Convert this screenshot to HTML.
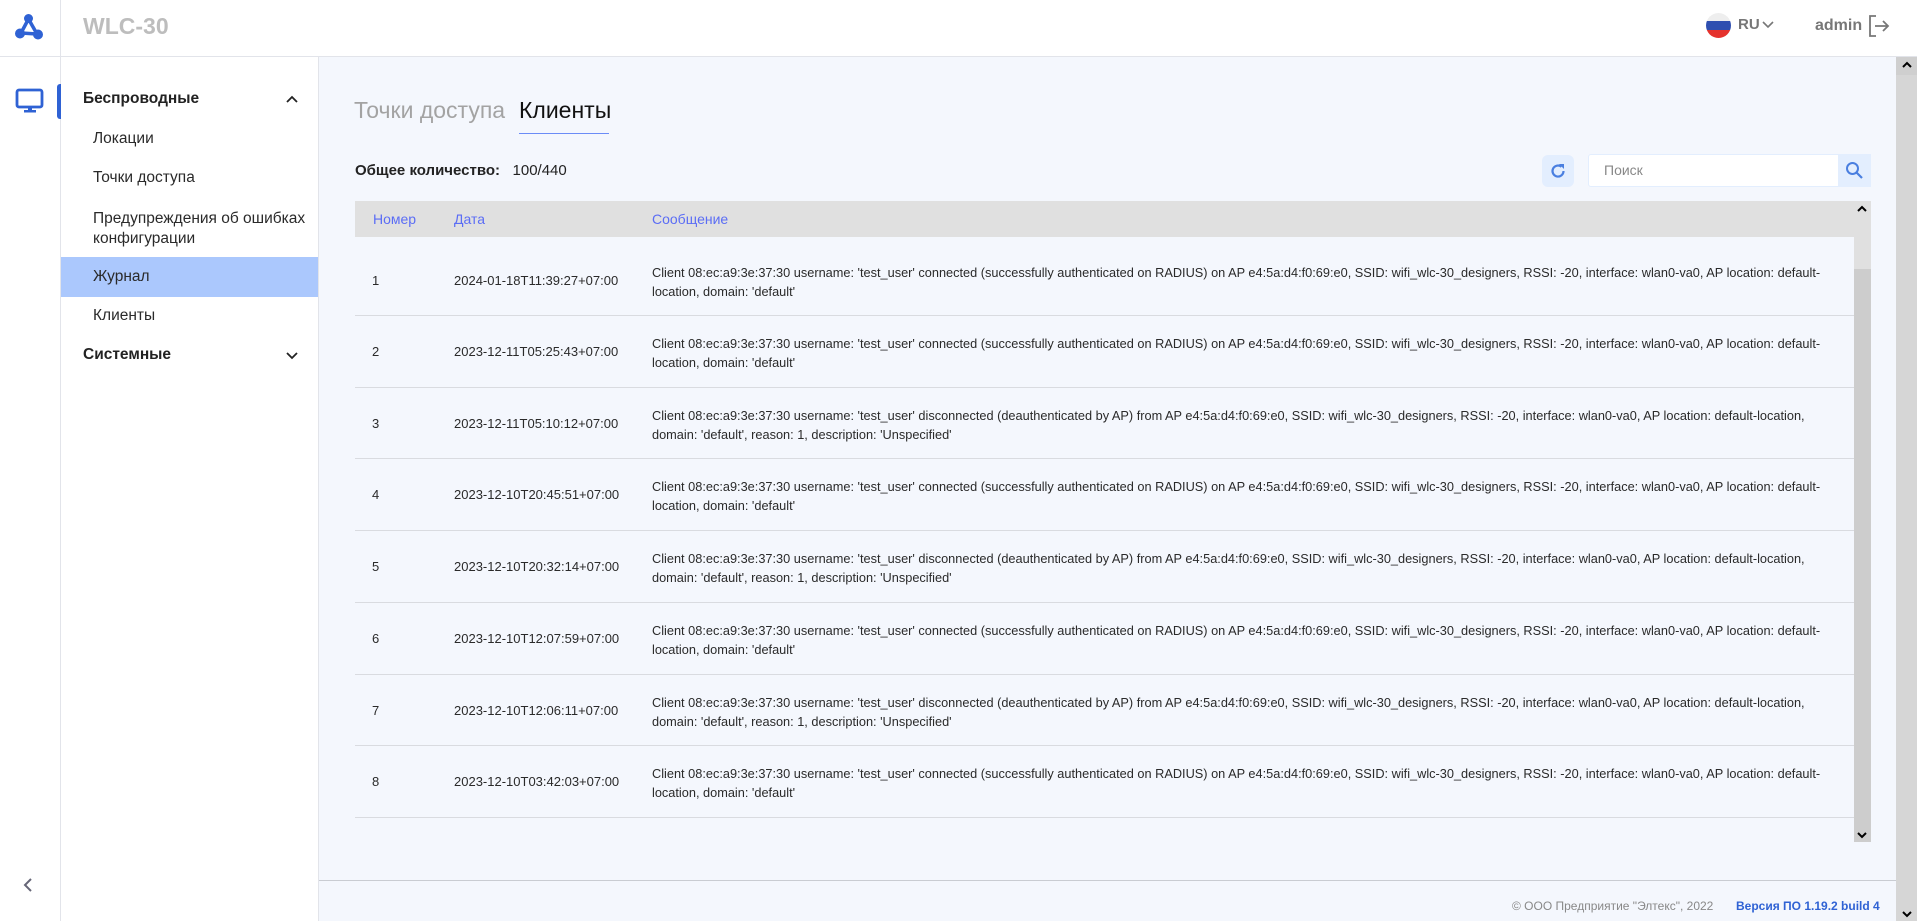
<!DOCTYPE html>
<html><head><meta charset="utf-8"><style>
*{box-sizing:border-box;margin:0;padding:0}
body{width:1917px;height:921px;overflow:hidden;font-family:"Liberation Sans",sans-serif;background:#f4f7fd;position:relative;color:#222}
.abs{position:absolute}
.hdr{left:0;top:0;width:1917px;height:57px;background:#fff;border-bottom:1px solid #e2e4ea}
.rail{left:0;top:57px;width:61px;height:864px;background:#fff;border-right:1px solid #e2e4ea}
.side{left:61px;top:57px;width:258px;height:864px;background:#fff;border-right:1px solid #e2e4ea}
.mi{position:absolute;left:32px;font-size:15.5px;color:#2a2a2a}
.mh{position:absolute;left:22px;font-size:15.5px;font-weight:bold;color:#222}
.row{position:absolute;left:355px;width:1499px;border-bottom:1px solid #d9dbe0;font-size:13px;color:#2a2a2a}
.row .n{position:absolute;left:17px}
.row .d{position:absolute;left:99px}
.row .m{position:absolute;left:297px;line-height:19px;white-space:nowrap;font-size:12.75px}
</style></head><body>
<div class="abs hdr"></div>
<div class="abs" style="left:60px;top:0;width:1px;height:57px;background:#e2e4ea"></div>
<svg class="abs" style="left:12px;top:12px" width="32" height="32" viewBox="0 0 32 32">
<line x1="16.5" y1="7" x2="9" y2="21" stroke="#2f62d4" stroke-width="3.5"/><line x1="16.5" y1="7" x2="25" y2="22" stroke="#2f62d4" stroke-width="3.5"/><line x1="9" y1="21" x2="25" y2="22" stroke="#2f62d4" stroke-width="3.5"/>
<circle cx="16.5" cy="6.5" r="4.5" fill="#2f62d4"/><circle cx="8" cy="21.5" r="5" fill="#2f62d4"/><circle cx="26" cy="22.5" r="5" fill="#2f62d4"/></svg>
<div class="abs" style="left:83px;top:13px;font-size:23px;font-weight:bold;color:#bdbdbd">WLC-30</div>
<div class="abs" style="left:1706px;top:13px;width:25px;height:25px;border-radius:50%;overflow:hidden"><div style="height:8px;background:#eee"></div><div style="height:9px;background:#2f4fb0"></div><div style="height:8px;background:#e5322d"></div></div>
<div class="abs" style="left:1738px;top:16px;font-size:15px;font-weight:bold;color:#777">RU</div>
<svg class="abs" style="left:1762px;top:21px" width="12" height="8"><path d="M1 1l5 5 5-5" stroke="#777" stroke-width="1.6" fill="none"/></svg>
<div class="abs" style="left:1815px;top:17px;font-size:16px;font-weight:bold;color:#777">admin</div>
<svg class="abs" style="left:1868px;top:14px" width="22" height="24" viewBox="0 0 22 24"><path d="M8 2H2v20h6" stroke="#777" stroke-width="1.8" fill="none"/><path d="M7 12h13M15 7l5 5-5 5" stroke="#777" stroke-width="1.8" fill="none"/></svg>

<div class="abs rail"></div>
<svg class="abs" style="left:15px;top:88px" width="30" height="26" viewBox="0 0 30 26"><rect x="2" y="2" width="25" height="17" rx="2" stroke="#2f62d4" stroke-width="2.8" fill="none"/><rect x="13" y="19" width="4" height="4" fill="#2f62d4"/><rect x="9" y="22" width="12" height="2.5" fill="#2f62d4"/></svg>
<div class="abs" style="left:57px;top:84px;width:4px;height:35px;background:#2f62d4;border-radius:3px 0 0 3px"></div>
<svg class="abs" style="left:23px;top:878px" width="10" height="14"><path d="M8 1L2 7l6 6" stroke="#667" stroke-width="2" fill="none"/></svg>

<div class="abs side">
<div class="mh" style="top:33px">Беспроводные</div>
<svg style="position:absolute;left:225px;top:38px" width="12" height="8"><path d="M1 7l5-5 5 5" stroke="#222" stroke-width="1.8" fill="none"/></svg>
<div class="mi" style="top:73px">Локации</div>
<div class="mi" style="top:112px">Точки доступа</div>
<div class="mi" style="top:152px;line-height:20px">Предупреждения об ошибках<br>конфигурации</div>
<div style="position:absolute;left:0;top:200px;width:257px;height:40px;background:#abc8fd"></div>
<div class="mi" style="top:211px">Журнал</div>
<div class="mi" style="top:250px">Клиенты</div>
<div class="mh" style="top:289px">Системные</div>
<svg style="position:absolute;left:225px;top:295px" width="12" height="8"><path d="M1 1l5 5 5-5" stroke="#222" stroke-width="1.8" fill="none"/></svg>
</div>

<div class="abs" style="left:354px;top:97px;font-size:23px;color:#a3a3a3">Точки доступа</div>
<div class="abs" style="left:519px;top:97px;font-size:23px;color:#111">Клиенты</div>
<div class="abs" style="left:519px;top:133px;width:90px;height:1px;background:#6b8cf7"></div>
<div class="abs" style="left:355px;top:162px;font-size:15px"><b>Общее количество:</b>&nbsp;&nbsp; 100/440</div>

<div class="abs" style="left:1542px;top:155px;width:32px;height:32px;background:#e3eefe;border-radius:6px"></div>
<svg class="abs" style="left:1549px;top:162px" width="18" height="18" viewBox="0 0 18 18"><path d="M14.5 9A5.5 5.5 0 1 1 12.5 4.8" stroke="#4a7fe0" stroke-width="2.2" fill="none"/><path d="M10 2h5v5z" fill="#4a7fe0"/></svg>
<div class="abs" style="left:1588px;top:154px;width:283px;height:33px;background:#fff;border:1px solid #e3eefe;border-radius:3px"></div>
<div class="abs" style="left:1604px;top:162px;font-size:14px;color:#888">Поиск</div>
<div class="abs" style="left:1838px;top:154px;width:33px;height:33px;background:#e3eefe"></div>
<svg class="abs" style="left:1845px;top:161px" width="19" height="19" viewBox="0 0 19 19"><circle cx="7.5" cy="7.5" r="5.5" stroke="#4a7fe0" stroke-width="2" fill="none"/><path d="M11.5 11.5l5.5 5.5" stroke="#4a7fe0" stroke-width="2.2"/></svg>

<div class="abs" style="left:355px;top:201px;width:1516px;height:36px;background:#e0e0e0"></div>
<div class="abs" style="left:373px;top:211px;font-size:14px;color:#5b6df5">Номер</div>
<div class="abs" style="left:454px;top:211px;font-size:14px;color:#5b6df5">Дата</div>
<div class="abs" style="left:652px;top:211px;font-size:14px;color:#5b6df5">Сообщение</div>
<div class="abs" style="left:1854px;top:201px;width:17px;height:641px;background:#e0e0e0"></div>
<div class="abs" style="left:1854px;top:269px;width:17px;height:573px;background:#cdcdcd"></div>
<svg class="abs" style="left:1857px;top:205px" width="10" height="8"><path d="M1 6l4-4 4 4" stroke="#000" stroke-width="2" fill="none"/></svg>
<svg class="abs" style="left:1857px;top:831px" width="10" height="8"><path d="M1 2l4 4 4-4" stroke="#000" stroke-width="2" fill="none"/></svg>

<div class="row" style="top:237px;height:79px"><span class="n" style="top:36px">1</span><span class="d" style="top:36px">2024-01-18T11:39:27+07:00</span><span class="m" style="top:26px">Client 08:ec:a9:3e:37:30 username: 'test_user' connected (successfully authenticated on RADIUS) on AP e4:5a:d4:f0:69:e0, SSID: wifi_wlc-30_designers, RSSI: -20, interface: wlan0-va0, AP location: default-<br>location, domain: 'default'</span></div>
<div class="row" style="top:316px;height:72px"><span class="n" style="top:28px">2</span><span class="d" style="top:28px">2023-12-11T05:25:43+07:00</span><span class="m" style="top:18px">Client 08:ec:a9:3e:37:30 username: 'test_user' connected (successfully authenticated on RADIUS) on AP e4:5a:d4:f0:69:e0, SSID: wifi_wlc-30_designers, RSSI: -20, interface: wlan0-va0, AP location: default-<br>location, domain: 'default'</span></div>
<div class="row" style="top:388px;height:71px"><span class="n" style="top:28px">3</span><span class="d" style="top:28px">2023-12-11T05:10:12+07:00</span><span class="m" style="top:18px">Client 08:ec:a9:3e:37:30 username: 'test_user' disconnected (deauthenticated by AP) from AP e4:5a:d4:f0:69:e0, SSID: wifi_wlc-30_designers, RSSI: -20, interface: wlan0-va0, AP location: default-location,<br>domain: 'default', reason: 1, description: 'Unspecified'</span></div>
<div class="row" style="top:459px;height:72px"><span class="n" style="top:28px">4</span><span class="d" style="top:28px">2023-12-10T20:45:51+07:00</span><span class="m" style="top:18px">Client 08:ec:a9:3e:37:30 username: 'test_user' connected (successfully authenticated on RADIUS) on AP e4:5a:d4:f0:69:e0, SSID: wifi_wlc-30_designers, RSSI: -20, interface: wlan0-va0, AP location: default-<br>location, domain: 'default'</span></div>
<div class="row" style="top:531px;height:72px"><span class="n" style="top:28px">5</span><span class="d" style="top:28px">2023-12-10T20:32:14+07:00</span><span class="m" style="top:18px">Client 08:ec:a9:3e:37:30 username: 'test_user' disconnected (deauthenticated by AP) from AP e4:5a:d4:f0:69:e0, SSID: wifi_wlc-30_designers, RSSI: -20, interface: wlan0-va0, AP location: default-location,<br>domain: 'default', reason: 1, description: 'Unspecified'</span></div>
<div class="row" style="top:603px;height:72px"><span class="n" style="top:28px">6</span><span class="d" style="top:28px">2023-12-10T12:07:59+07:00</span><span class="m" style="top:18px">Client 08:ec:a9:3e:37:30 username: 'test_user' connected (successfully authenticated on RADIUS) on AP e4:5a:d4:f0:69:e0, SSID: wifi_wlc-30_designers, RSSI: -20, interface: wlan0-va0, AP location: default-<br>location, domain: 'default'</span></div>
<div class="row" style="top:675px;height:71px"><span class="n" style="top:28px">7</span><span class="d" style="top:28px">2023-12-10T12:06:11+07:00</span><span class="m" style="top:18px">Client 08:ec:a9:3e:37:30 username: 'test_user' disconnected (deauthenticated by AP) from AP e4:5a:d4:f0:69:e0, SSID: wifi_wlc-30_designers, RSSI: -20, interface: wlan0-va0, AP location: default-location,<br>domain: 'default', reason: 1, description: 'Unspecified'</span></div>
<div class="row" style="top:746px;height:72px"><span class="n" style="top:28px">8</span><span class="d" style="top:28px">2023-12-10T03:42:03+07:00</span><span class="m" style="top:18px">Client 08:ec:a9:3e:37:30 username: 'test_user' connected (successfully authenticated on RADIUS) on AP e4:5a:d4:f0:69:e0, SSID: wifi_wlc-30_designers, RSSI: -20, interface: wlan0-va0, AP location: default-<br>location, domain: 'default'</span></div>

<div class="abs" style="left:319px;top:880px;width:1577px;height:1px;background:#c9ccd2"></div>
<div class="abs" style="left:1512px;top:899px;font-size:12px;color:#888">© ООО Предприятие "Элтекс", 2022</div>
<div class="abs" style="left:1736px;top:899px;font-size:12px;font-weight:bold;color:#2f62d4">Версия ПО 1.19.2 build 4</div>

<div class="abs" style="left:1896px;top:57px;width:21px;height:864px;background:#d6d6d6"></div>
<div class="abs" style="left:1896px;top:57px;width:21px;height:18px;background:#cfcfcf"></div>
<svg class="abs" style="left:1902px;top:61px" width="10" height="8"><path d="M1 6l4-4 4 4" stroke="#000" stroke-width="2" fill="none"/></svg>
<svg class="abs" style="left:1902px;top:910px" width="10" height="8"><path d="M1 2l4 4 4-4" stroke="#000" stroke-width="2" fill="none"/></svg>
</body></html>
